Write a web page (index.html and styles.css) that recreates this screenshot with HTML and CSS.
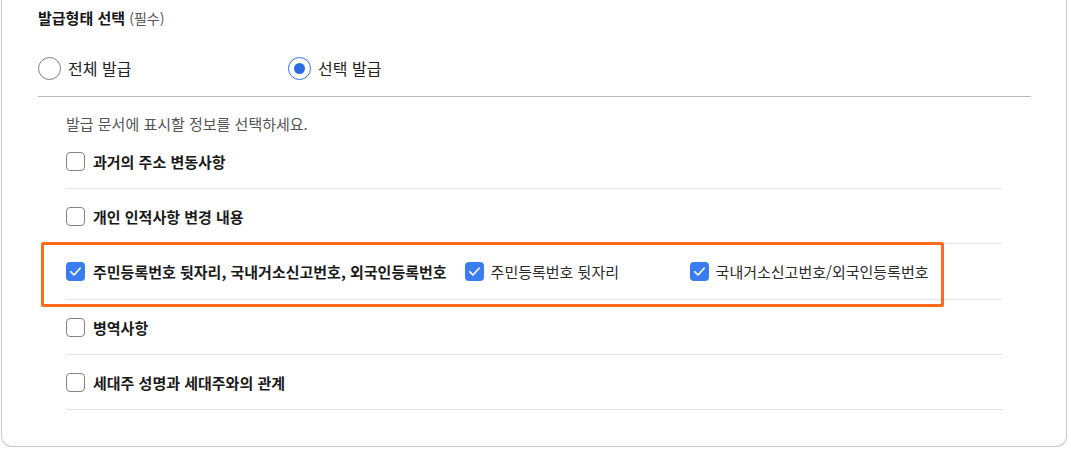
FILE: index.html
```html
<!DOCTYPE html>
<html lang="ko">
<head>
<meta charset="utf-8">
<title>발급형태 선택</title>
<link rel="stylesheet" href="styles.css">
</head>
<body>
<div class="card">
  <div class="title">발급형태 선택 <span class="req">(필수)</span></div>
  <div class="radios">
    <label class="radio"><span class="circle"></span><span>전체 발급</span></label>
    <label class="radio"><span class="circle on"></span><span>선택 발급</span></label>
  </div>
  <p class="desc">발급 문서에 표시할 정보를 선택하세요.</p>
  <ul class="list">
    <li class="row"><span class="box"></span><span class="lbl">과거의 주소 변동사항</span></li>
    <li class="row"><span class="box"></span><span class="lbl">개인 인적사항 변경 내용</span></li>
    <li class="row hl">
      <span class="box on"><svg viewBox="0 0 18 18"><path d="M4.6 9.3l3 3 5.8-6.4" fill="none" stroke="#fff" stroke-width="1.6" stroke-linecap="round" stroke-linejoin="round"/></svg></span><span class="lbl">주민등록번호 뒷자리, 국내거소신고번호, 외국인등록번호</span>
      <span class="sub"><span class="box on"><svg viewBox="0 0 18 18"><path d="M4.6 9.3l3 3 5.8-6.4" fill="none" stroke="#fff" stroke-width="1.6" stroke-linecap="round" stroke-linejoin="round"/></svg></span><span class="slbl">주민등록번호 뒷자리</span></span>
      <span class="sub"><span class="box on"><svg viewBox="0 0 18 18"><path d="M4.6 9.3l3 3 5.8-6.4" fill="none" stroke="#fff" stroke-width="1.6" stroke-linecap="round" stroke-linejoin="round"/></svg></span><span class="slbl">국내거소신고번호/외국인등록번호</span></span>
      <span class="frame"></span>
    </li>
    <li class="row"><span class="box"></span><span class="lbl">병역사항</span></li>
    <li class="row"><span class="box"></span><span class="lbl">세대주 성명과 세대주와의 관계</span></li>
  </ul>
</div>
</body>
</html>
```
FILE: styles.css
```css
html, body {
  margin: 0;
  padding: 0;
  background: #fff;
}
body {
  font-family: "Noto Sans CJK KR", "Noto Sans", sans-serif;
  color: #1e1e1e;
}
.card {
  box-sizing: border-box;
  margin-left: 1px;
  width: 1066px;
  height: 447px;
  border: 1px solid #c9c9c9;
  border-top: none;
  border-radius: 0 0 11px 11px;
  padding: 7px 35px 0 36px;
}
.title {
  font-size: 15px;
  line-height: 22px;
  height: 22px;
  font-weight: 700;
  color: #151515;
}
.req {
  font-size: 14px;
  line-height: 1;
  font-weight: 400;
  color: #555;
}
.radios {
  display: flex;
  margin-top: 27px;
  padding-bottom: 16px;
  border-bottom: 1px solid #b6bac3;
}
.radio {
  display: flex;
  align-items: center;
  gap: 7px;
  width: 250px;
  height: 24px;
  font-size: 16px;
  line-height: 24px;
  color: #222;
}
.circle {
  box-sizing: border-box;
  width: 23px;
  height: 23px;
  border: 1.5px solid #7d7d7d;
  border-radius: 50%;
  display: flex;
  align-items: center;
  justify-content: center;
}
.circle.on {
  border-color: #2f6fe6;
}
.circle.on::after {
  content: "";
  width: 11px;
  height: 11px;
  border-radius: 50%;
  background: #2a6be4;
}
.desc {
  margin: 17px 0 0 28px;
  font-size: 15px;
  line-height: 20px;
  color: #555;
}
.list {
  list-style: none;
  margin: 0 29px 0 28px;
  padding: 0;
}
.row {
  position: relative;
  display: flex;
  align-items: center;
  height: 54px;
  border-bottom: 1px solid #e2e2e6;
}
.row.hl {
  height: 55px;
}
.box {
  box-sizing: border-box;
  flex: none;
  width: 19px;
  height: 19px;
  border: 1.5px solid #828282;
  border-radius: 4px;
  margin-right: 8px;
  display: flex;
  align-items: center;
  justify-content: center;
}
.box.on {
  border: none;
  background: #3a7cf2;
}
.box svg {
  width: 19px;
  height: 19px;
  display: block;
}
.lbl {
  font-size: 15px;
  font-weight: 700;
  color: #1a1a1a;
  white-space: nowrap;
}
.sub {
  display: flex;
  align-items: center;
  width: 225px;
  flex: none;
  white-space: nowrap;
}
.sub .box {
  margin-right: 7px;
}
.hl .lbl {
  margin-right: 18px;
}
.slbl {
  font-size: 15px;
  color: #2a2a2a;
}
.frame {
  position: absolute;
  left: -25px;
  top: -2px;
  width: 903px;
  height: 65px;
  box-sizing: border-box;
  border: 3px solid #ff6a1c;
  border-radius: 2px;
  pointer-events: none;
}
```
